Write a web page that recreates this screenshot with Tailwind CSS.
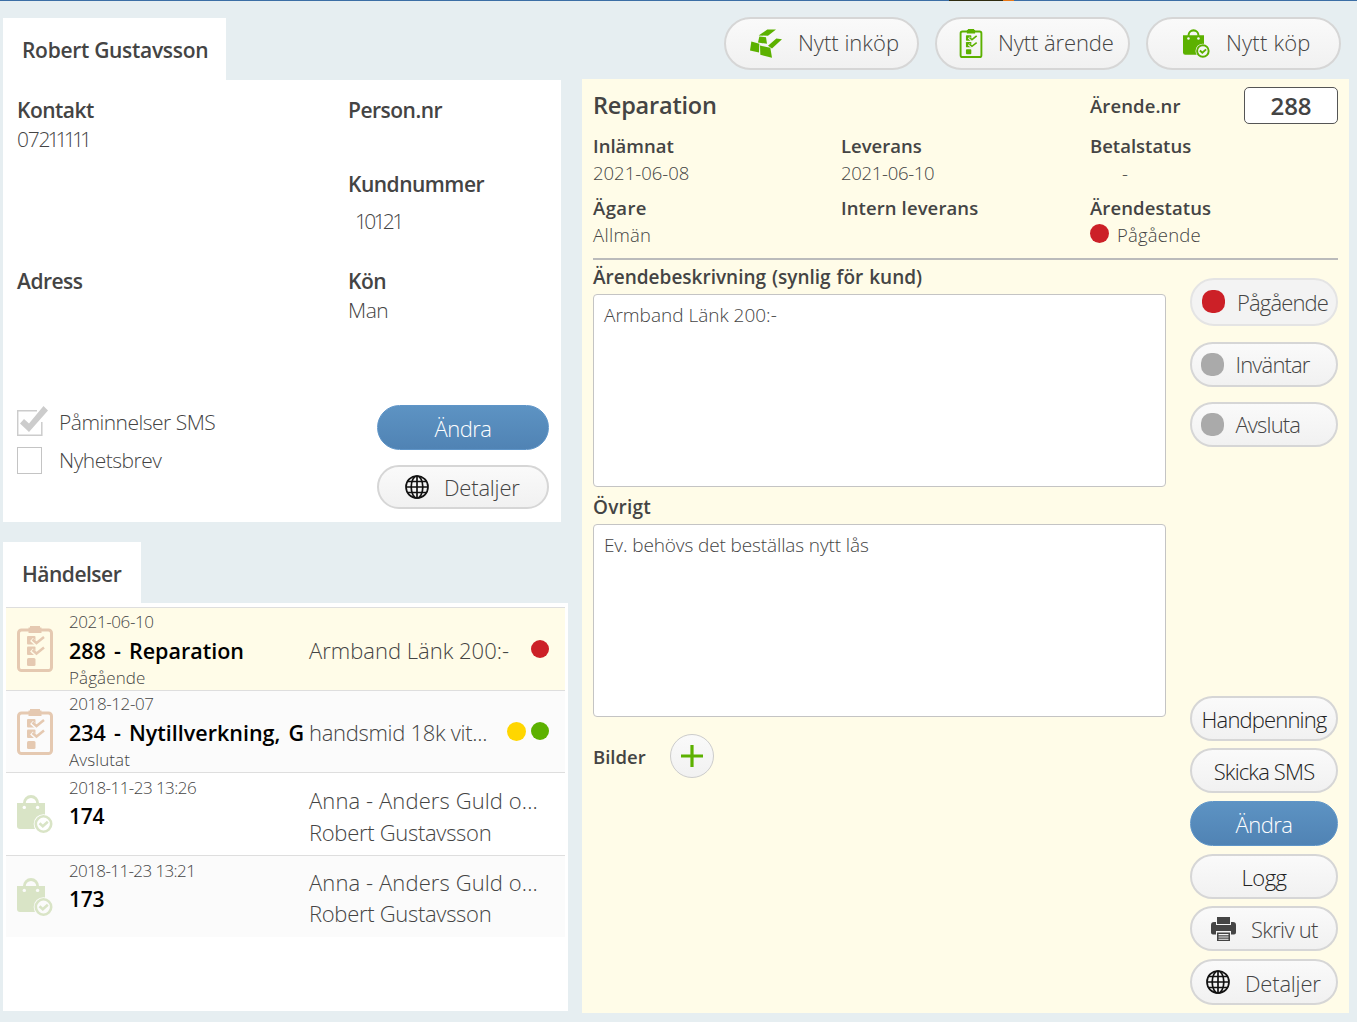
<!DOCTYPE html>
<html lang="sv">
<head>
  <meta charset="UTF-8" />
  <meta name="viewport" content="width=device-width, initial-scale=1" />
  <title>Kundkort</title>
  <script src="https://cdn.jsdelivr.net/npm/@tailwindcss/browser@4"></script>
</head>
<body class="bg-[#e6eef1] font-['Open_Sans',sans-serif] font-light text-[#444]">

  <!-- Icons -->
  <svg class="absolute size-0">
    <mask id="checks" maskUnits="userSpaceOnUse" x="0" y="0" width="36" height="46">
      <rect width="36" height="46" fill="#fff" />
      <path d="M14.500 13.500l4 3.500 9-6.500M14.500 24l4 3.500 9-6.500" fill="none" stroke="#000" stroke-width="4.200" />
    </mask>
    <mask id="bagcut" maskUnits="userSpaceOnUse" x="0" y="0" width="36" height="38">
      <rect width="36" height="38" fill="#fff" />
      <circle cx="7.300" cy="12.400" r="1.700" />
      <circle cx="20.600" cy="12.400" r="1.700" />
      <circle cx="26.500" cy="29" r="9.800" />
    </mask>
    <symbol id="clipboard" viewBox="0 0 36 46">
      <rect x="1.500" y="4" width="33" height="40.500" rx="3" fill="none" stroke="currentColor" stroke-width="3" />
      <path d="M13 0h10v1.500h1.500V7h-13V1.500H13z" fill="currentColor" />
      <g mask="url(#checks)" fill="currentColor">
        <rect x="10" y="10" width="8.500" height="8.500" rx="1" />
        <rect x="10" y="20.500" width="8.500" height="8.500" rx="1" />
      </g>
      <rect x="10" y="32" width="8.500" height="8" rx="1.500" fill="currentColor" />
      <path d="M15.500 13.500l4 3.500 7.500-6M15.500 24l4 3.500 7.500-6" fill="none" stroke="currentColor" stroke-width="2.500" />
    </symbol>
    <symbol id="bag" viewBox="0 0 36 38">
      <path d="M7.300 8.500a6.700 7 0 0 1 13.400 0" fill="none" stroke="currentColor" stroke-width="2.800" />
      <path d="M0 8h28v26H3a3 3 0 0 1-3-3z" fill="currentColor" mask="url(#bagcut)" />
      <circle cx="26.500" cy="29" r="7.700" fill="none" stroke="currentColor" stroke-width="2.600" />
      <path d="M22.500 28.300l3.300 3 5-4.500" fill="none" stroke="currentColor" stroke-width="2.600" />
    </symbol>
    <symbol id="gold" viewBox="0 0 96 86">
      <path d="M26 19L52 1h26L54 20zM28 22l20 2 3 20-27-4zM4 37l24 7-1 26-27-6zM30 49l31 7 5 30-35-9zM54 50L79 28l17 2-30 28z" fill="currentColor" />
    </symbol>
    <symbol id="globe" viewBox="0 0 24 24">
      <g fill="none" stroke="currentColor" stroke-width="1.700">
        <circle cx="12" cy="12" r="11" />
        <ellipse cx="12" cy="12" rx="5.800" ry="11" />
        <path d="M12 1v22M1 12h22M3 6.500h18M3 17.500h18" />
      </g>
    </symbol>
    <symbol id="printer" viewBox="0 0 25 24">
      <path d="M6 0h13v7H6zM3 5h2v3h15V5h2a3 3 0 0 1 3 3v7.500a2 2 0 0 1-2 2h-3V14H5v3.500H2a2 2 0 0 1-2-2V8a3 3 0 0 1 3-3zM6 15.500h13V24H6zM7.500 17v1.300h10V17zM7.500 19.500v1h10v-1zM7.500 21.700v1h10v-1z" fill="currentColor" fill-rule="evenodd" />
    </symbol>
  </svg>

  <div class="w-[1357px] h-[1022px] flex flex-col overflow-hidden">
    <!-- Bottom edge of the top bar -->
    <div class="h-px shrink-0 bg-[#3b6ea5] flex">
      <div class="ml-[949px] w-[54px] bg-[#2e2c10]"></div>
      <div class="w-[11px] bg-[#e87817]"></div>
    </div>

    <div class="flex grow">
      <!-- Left column -->
      <div class="w-[582px] shrink-0 pl-[3px] pt-[17px]">
        <div class="w-[223px] h-[62px] bg-white pl-[19px] text-[21px] leading-[65px] font-semibold tracking-[-0.3px] whitespace-nowrap">Robert Gustavsson</div>

        <!-- Customer card -->
        <section class="w-[558px] h-[442px] bg-white pl-[14px] pt-[16px] text-[21px] leading-[29px] tracking-[-0.5px]">
          <div class="grid grid-cols-[331px_1fr] grid-rows-[74px_97px_138px]">
            <div>
              <h3 class="font-semibold">Kontakt</h3>
              <p class="tracking-[-1.2px]">072<span class="tracking-[-3.800px] -ml-[2px]">11111</span></p>
            </div>
            <h3 class="font-semibold">Person.nr</h3>
            <div></div>
            <div>
              <h3 class="font-semibold">Kundnummer</h3>
              <p class="pt-[8px] pl-[7px] tracking-[-2.7px]">10121</p>
            </div>
            <h3 class="font-semibold">Adress</h3>
            <div>
              <h3 class="font-semibold">Kön</h3>
              <p>Man</p>
            </div>
          </div>
          <div class="flex">
            <div class="w-[360px]">
              <div class="flex h-[37px]">
                <svg class="w-[32px] h-[32px]" viewBox="0 0 32 32">
                  <path d="M20 5.700H.7v24.600h24.100V17" fill="none" stroke="#ccc" stroke-width="1.500" />
                  <path d="M3 18.500l4-4.500 5 4.500L26.500 1l4.500 4.500L12 27z" fill="#ccc" />
                </svg>
                <span class="pl-[10px] pt-[3px]">Påminnelser SMS</span>
              </div>
              <div class="flex">
                <div class="mt-[5px] w-[25px] h-[27px] border-[1.500px] border-[#c4c4c4]"></div>
                <span class="pl-[17px] pt-[4px]">Nyhetsbrev</span>
              </div>
            </div>
            <div class="flex flex-col gap-[15px] w-[172px] text-[22px]">
              <button class="h-[45px] rounded-full border border-[#5f95c8] bg-linear-to-b from-[#5d93c3] to-[#5083b4] text-white pt-[2px]">Ändra</button>
              <button class="h-[44px] rounded-full border-2 border-[#d6d6d6] bg-linear-to-b from-[#fafafa] to-[#f1f1f1] flex items-center pl-[26px]">
                <svg class="size-[24px] text-[#111]"><use href="#globe" /></svg>
                <span class="pl-[15px] tracking-[-0.200px]">Detaljer</span>
              </button>
            </div>
          </div>
        </section>

        <!-- Events -->
        <div class="mt-[20px] w-[138px] h-[61px] bg-white pl-[19px] text-[21px] leading-[64px] font-semibold tracking-[-0.500px]">Händelser</div>
        <section class="w-[565px] h-[408px] bg-white pt-[4px] px-[3px] text-[22px]">
          <div class="flex h-[83px] border-t border-[#dedede] bg-[#fffce8] pl-[11px]">
            <svg class="w-[36px] h-[46px] mt-[18px] text-[#e5c9b1]"><use href="#clipboard" /></svg>
            <div class="ml-[16px] w-[234px] pt-[2px] overflow-hidden whitespace-nowrap">
              <p class="text-[17px] leading-[24px] tracking-[-0.4px]">2021-06-10</p>
              <h4 class="text-[21.500px] leading-[34px] font-semibold text-black [word-spacing:2.500px]">288 - Reparation</h4>
              <p class="text-[17px] leading-[20px] tracking-[0.100px]">Pågående</p>
            </div>
            <p class="ml-[6px] w-[222px] leading-[85px]">Armband Länk 200:-</p>
            <div class="mt-[32px] size-[18px] rounded-full bg-[#cc2027]"></div>
          </div>
          <div class="flex h-[82px] border-t border-[#dedede] bg-[#fbfbfb] pl-[11px]">
            <svg class="w-[36px] h-[46px] mt-[18px] text-[#e5c9b1]"><use href="#clipboard" /></svg>
            <div class="ml-[16px] w-[234px] pt-[1px] overflow-hidden whitespace-nowrap">
              <p class="text-[17px] leading-[24px] tracking-[-0.4px]">2018-12-07</p>
              <h4 class="text-[21.500px] leading-[34px] font-semibold text-black [word-spacing:2.500px]">234 - Nytillverkning, Guld</h4>
              <p class="text-[17px] leading-[20px] tracking-[0.100px]">Avslutat</p>
            </div>
            <p class="ml-[6px] w-[198px] leading-[83px] tracking-[-0.300px]">handsmid 18k vit...</p>
            <div class="mt-[31px] size-[19px] rounded-full bg-[#ffd600]"></div>
            <div class="ml-[5px] mt-[31px] size-[18px] rounded-full bg-[#5cb100]"></div>
          </div>
          <div class="flex h-[83px] border-t border-[#dedede] pl-[11px]">
            <svg class="w-[36px] h-[38px] mt-[22px] text-[#d9e4c6]"><use href="#bag" /></svg>
            <div class="ml-[16px] w-[234px] pt-[2px] whitespace-nowrap">
              <p class="text-[17px] leading-[25px] tracking-[-0.550px]">2018-11-23 13:26</p>
              <h4 class="text-[21px] leading-[33px] font-semibold text-black tracking-[-0.3px]">174</h4>
            </div>
            <div class="ml-[6px] pt-[11px] leading-[32px]">
              <p class="tracking-[0.100px]">Anna - Anders Guld o...</p>
              <p class="tracking-[-0.300px]">Robert Gustavsson</p>
            </div>
          </div>
          <div class="flex h-[82px] border-t border-[#dedede] bg-[#fbfbfb] pl-[11px]">
            <svg class="w-[36px] h-[38px] mt-[22px] text-[#d9e4c6]"><use href="#bag" /></svg>
            <div class="ml-[16px] w-[234px] pt-[2px] whitespace-nowrap">
              <p class="text-[17px] leading-[25px] tracking-[-0.600px]">2018-11-23 13:21</p>
              <h4 class="text-[21px] leading-[33px] font-semibold text-black tracking-[-0.3px]">173</h4>
            </div>
            <div class="ml-[6px] pt-[11px] leading-[31px]">
              <p class="tracking-[0.100px]">Anna - Anders Guld o...</p>
              <p class="tracking-[-0.300px]">Robert Gustavsson</p>
            </div>
          </div>
        </section>
      </div>

      <!-- Right column -->
      <div class="w-[767px] shrink-0">
        <div class="h-[78px] pt-[15.500px] flex justify-end gap-[16px] pr-[8px] text-[22px] leading-[30px]">
          <button class="w-[195px] h-[53px] rounded-full border-2 border-[#d6d6d6] bg-linear-to-b from-[#fafafa] to-[#f1f1f1] flex items-center pl-[24px]">
            <svg class="w-[32px] h-[29px] text-[#5cb100]"><use href="#gold" /></svg>
            <span class="pl-[16px] pb-[3px]">Nytt inköp</span>
          </button>
          <button class="w-[195px] h-[53px] rounded-full border-2 border-[#d6d6d6] bg-linear-to-b from-[#fafafa] to-[#f1f1f1] flex items-center pl-[22px]">
            <svg class="w-[24px] h-[29px] text-[#5cb100]"><use href="#clipboard" /></svg>
            <span class="pl-[15px] pb-[3px] tracking-[-0.100px]">Nytt ärende</span>
          </button>
          <button class="w-[195px] h-[53px] rounded-full border-2 border-[#d6d6d6] bg-linear-to-b from-[#fafafa] to-[#f1f1f1] flex items-center pl-[35px]">
            <svg class="w-[27px] h-[29px] text-[#5cb100]"><use href="#bag" /></svg>
            <span class="pl-[16px] pb-[3px] tracking-[0.200px]">Nytt köp</span>
          </button>
        </div>

        <!-- Case details -->
        <section class="h-[934px] bg-[#fffce8] px-[11px] text-[18.500px] leading-[27px]">
          <div class="flex items-center h-[53px] font-semibold">
            <h2 class="w-[497px] text-[23.500px] tracking-[-0.200px]">Reparation</h2>
            <span class="w-[154px] pb-px tracking-[0.100px]">Ärende.nr</span>
            <div class="w-[94px] h-[37px] rounded-[5px] border-[1.500px] border-[#555] bg-white text-center text-[24px] leading-[35px]">288</div>
          </div>
          <div class="grid grid-cols-[248px_249px_1fr] gap-y-[8px]">
            <div>
              <h3 class="font-semibold">Inlämnat</h3>
              <p>2021-06-08</p>
            </div>
            <div>
              <h3 class="font-semibold">Leverans</h3>
              <p class="tracking-[-0.300px]">2021-06-10</p>
            </div>
            <div>
              <h3 class="font-semibold">Betalstatus</h3>
              <p class="pl-[32px]">-</p>
            </div>
            <div>
              <h3 class="font-semibold tracking-[0.400px]">Ägare</h3>
              <p class="tracking-[0.300px]">Allmän</p>
            </div>
            <h3 class="font-semibold tracking-[0.100px]">Intern leverans</h3>
            <div>
              <h3 class="font-semibold tracking-[0.100px]">Ärendestatus</h3>
              <p class="flex tracking-[0.200px]"><span class="mt-[3px] mr-[8px] size-[19px] rounded-full bg-[#cc2027]"></span>Pågående</p>
            </div>
          </div>
          <div class="mt-[10px] h-[1.500px] bg-[#bbb]"></div>

          <div class="flex justify-between">
            <div class="w-[573px] pt-[4px]">
              <h3 class="text-[19px] font-semibold [word-spacing:1px]">Ärendebeskrivning (synlig för kund)</h3>
              <div class="mt-[3px] h-[193px] rounded-[4px] border-[1.500px] border-[#c4c4c4] bg-white pl-[10px] pt-[7px] text-[19px]">Armband Länk 200:-</div>
              <h3 class="mt-[7px] text-[19px] font-semibold tracking-[0.200px]">Övrigt</h3>
              <div class="mt-[3px] h-[193px] rounded-[4px] border-[1.500px] border-[#c4c4c4] bg-white pl-[10px] pt-[7px] text-[19px] tracking-[-0.120px]">Ev. behövs det beställas nytt lås</div>
              <div class="flex mt-[17px]">
                <h3 class="w-[77px] pt-[9px] font-semibold">Bilder</h3>
                <button class="size-[44px] rounded-full border-[1.500px] border-[#ccc] bg-linear-to-b from-[#fafafa] to-[#f1f1f1] flex items-center justify-center">
                  <svg class="size-[22px]" viewBox="0 0 22 22"><path d="M11 0v22M0 11h22" stroke="#5cb100" stroke-width="3.200" /></svg>
                </button>
              </div>
            </div>

            <!-- Actions -->
            <div class="w-[148px] pt-[18px] text-[22px] tracking-[-0.850px]">
              <button class="w-full h-[48px] rounded-full border-2 border-[#e4e4e4] bg-[#f3f3f3] flex items-center pl-[10px]">
                <span class="size-[23px] rounded-[10px] bg-[#cc2027]"></span>
                <span class="pl-[12px] pt-[2px]">Pågående</span>
              </button>
              <button class="mt-[16px] w-full h-[45px] rounded-full border-2 border-[#d6d6d6] bg-linear-to-b from-[#fafafa] to-[#f1f1f1] flex items-center pl-[8.500px]">
                <span class="size-[23px] rounded-[10px] bg-[#aaa]"></span>
                <span class="pl-[12px] pt-px">Inväntar</span>
              </button>
              <button class="mt-[15px] w-full h-[45px] rounded-full border-2 border-[#d6d6d6] bg-linear-to-b from-[#fafafa] to-[#f1f1f1] flex items-center pl-[8.500px]">
                <span class="size-[23px] rounded-[10px] bg-[#aaa]"></span>
                <span class="pl-[12px] pt-px">Avsluta</span>
              </button>
              <div class="mt-[249px] flex flex-col gap-[7.700px]">
                <button class="h-[45px] rounded-full border-2 border-[#d6d6d6] bg-linear-to-b from-[#fafafa] to-[#f1f1f1] pt-[3px] text-[#222]">Handpenning</button>
                <button class="h-[45px] rounded-full border-2 border-[#d6d6d6] bg-linear-to-b from-[#fafafa] to-[#f1f1f1] pt-[2px] text-[#222]">Skicka SMS</button>
                <button class="h-[45px] rounded-full border border-[#5f95c8] bg-linear-to-b from-[#5d93c3] to-[#5083b4] text-white pt-[2px] tracking-[-0.500px]">Ändra</button>
                <button class="h-[45px] rounded-full border-2 border-[#d6d6d6] bg-linear-to-b from-[#fafafa] to-[#f1f1f1] pt-[2px] text-[#222] tracking-[-0.500px]">Logg</button>
                <button class="h-[45px] rounded-full border-2 border-[#d6d6d6] bg-linear-to-b from-[#fafafa] to-[#f1f1f1] flex items-center pl-[19px]">
                  <svg class="w-[25px] h-[24px]"><use href="#printer" /></svg>
                  <span class="pl-[15px] pt-[2px] tracking-[-0.700px]">Skriv ut</span>
                </button>
                <button class="h-[46px] rounded-full border-2 border-[#d6d6d6] bg-linear-to-b from-[#fafafa] to-[#f1f1f1] flex items-center pl-[14px]">
                  <svg class="size-[24px] text-[#111]"><use href="#globe" /></svg>
                  <span class="pl-[15px] pt-[3px] tracking-[-0.200px]">Detaljer</span>
                </button>
              </div>
            </div>
          </div>
        </section>
      </div>
    </div>
  </div>
</body>
</html>
